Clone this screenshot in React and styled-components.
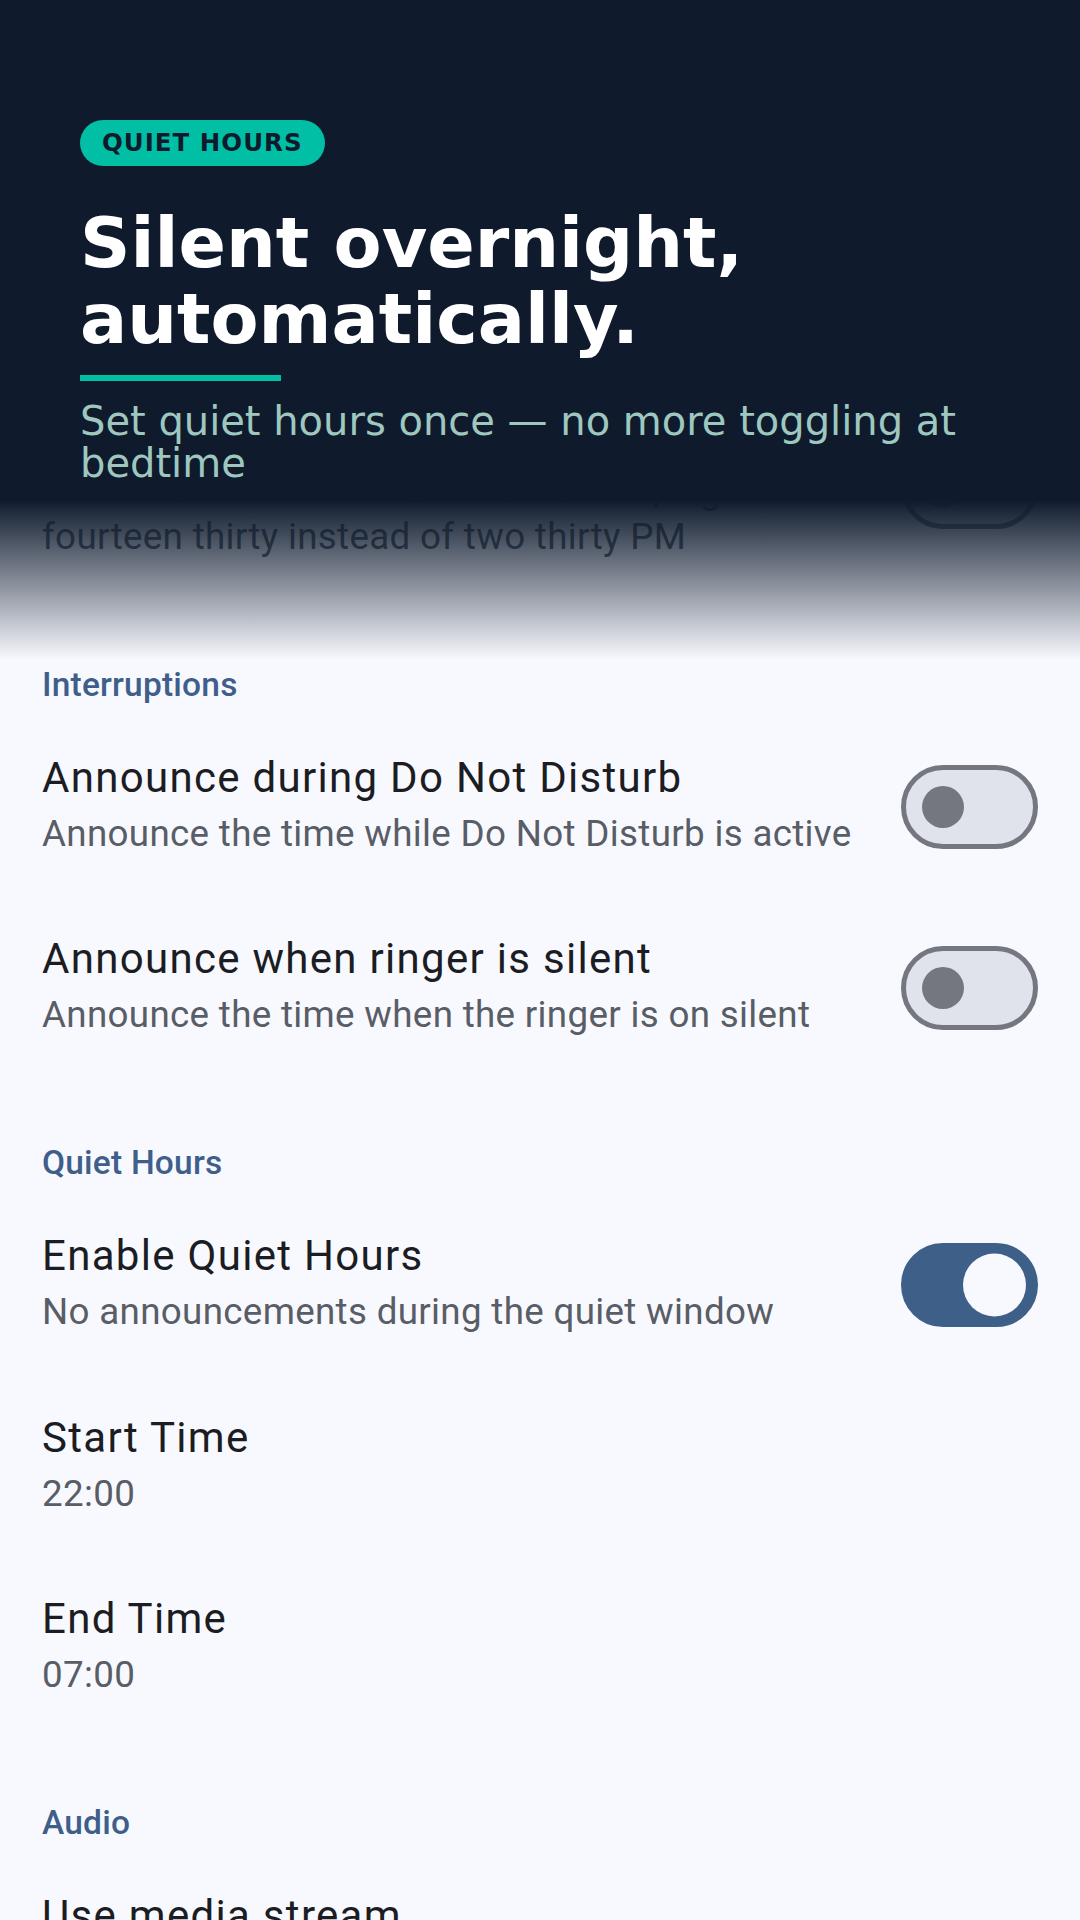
import React from 'react'
import styled, { createGlobalStyle } from 'styled-components'

const GlobalStyle = createGlobalStyle`
  html, body {
    margin: 0;
    padding: 0;
    background: #f8f9ff;
  }
  * {
    box-sizing: border-box;
  }
`

const sections = [
  {
    title: 'General',
    items: [
      { title: 'Announce the time', summary: 'Speak the time at regular intervals', toggle: true, on: true },
    ],
  },
  {
    title: 'Time Format',
    items: [
      {
        title: 'Use 24-hour format',
        summary: ['Announce the time in 24-hour format, e.g.', 'fourteen thirty instead of two thirty PM'],
        toggle: true,
        on: false,
      },
    ],
  },
  {
    title: 'Interruptions',
    items: [
      { title: 'Announce during Do Not Disturb', summary: 'Announce the time while Do Not Disturb is active', toggle: true, on: false },
      { title: 'Announce when ringer is silent', summary: 'Announce the time when the ringer is on silent', toggle: true, on: false },
    ],
  },
  {
    title: 'Quiet Hours',
    items: [
      { title: 'Enable Quiet Hours', summary: 'No announcements during the quiet window', toggle: true, on: true },
      { title: 'Start Time', summary: '22:00' },
      { title: 'End Time', summary: '07:00' },
    ],
  },
  {
    title: 'Audio',
    items: [
      {
        title: 'Use media stream',
        summary: ['Play announcements through the media', 'volume instead of the notification volume'],
        toggle: true,
        on: false,
      },
    ],
  },
]

const Switch = ({ on }) => (
  <Track $on={on}>
    <Thumb $on={on} />
  </Track>
)

const App = () => {
  return (
    <>
      <GlobalStyle />
      <Screen>
        <SettingsList>
          {sections.map((section) => (
            <Section key={section.title}>
              <SectionHeader>{section.title}</SectionHeader>
              {section.items.map((item) => (
                <PrefRow key={item.title}>
                  <PrefText>
                    <PrefTitle>{item.title}</PrefTitle>
                    {Array.isArray(item.summary) ? (
                      item.summary.map((line) => <PrefSummary key={line}>{line}</PrefSummary>)
                    ) : (
                      <PrefSummary>{item.summary}</PrefSummary>
                    )}
                  </PrefText>
                  {item.toggle && <Switch on={item.on} />}
                </PrefRow>
              ))}
            </Section>
          ))}
        </SettingsList>

        <HeroOverlay>
          <Badge>QUIET HOURS</Badge>
          <HeroTitle>Silent overnight, automatically.</HeroTitle>
          <AccentBar />
          <HeroSubtitle>Set quiet hours once — no more toggling at bedtime</HeroSubtitle>
        </HeroOverlay>
      </Screen>
    </>
  )
}

export default App

const Screen = styled.div`
  position: relative;
  width: 1080px;
  height: 1920px;
  overflow: hidden;
  background: #f8f9ff;
`

const SettingsList = styled.div`
  display: flex;
  flex-direction: column;
  padding-top: 74px;
  font-family: Roboto, "Noto Sans", sans-serif;
`

const Section = styled.div`
  display: flex;
  flex-direction: column;
  &:first-child > div:first-child {
    display: none;
  }
`

const SectionHeader = styled.div`
  padding: 64.5px 42px 7px;
  font-size: 33.5px;
  line-height: 44px;
  font-weight: 500;
  letter-spacing: 0.2px;
  color: #3f5f8a;
`

const PrefRow = styled.div`
  display: flex;
  align-items: center;
  gap: 42px;
  padding: 38.2px 42px;
`

const PrefText = styled.div`
  flex: 1;
  min-width: 0;
  display: flex;
  flex-direction: column;
`

const PrefTitle = styled.div`
  font-size: 42px;
  line-height: 52px;
  letter-spacing: 1.3px;
  color: #1b1d22;
  margin-bottom: 7px;
  white-space: nowrap;
`

const PrefSummary = styled.div`
  font-size: 36.75px;
  line-height: 46px;
  letter-spacing: 0.32px;
  color: #585d66;
  white-space: nowrap;
`

const Track = styled.div`
  flex: none;
  position: relative;
  width: 137px;
  height: 84px;
  margin-top: 5px;
  border-radius: 42px;
  border: 5.25px solid ${(p) => (p.$on ? '#3d5f88' : '#74777f')};
  background: ${(p) => (p.$on ? '#3d5f88' : '#e0e2ec')};
`

const Thumb = styled.div`
  position: absolute;
  top: 50%;
  transform: translateY(-50%);
  border-radius: 50%;
  width: ${(p) => (p.$on ? '63px' : '42px')};
  height: ${(p) => (p.$on ? '63px' : '42px')};
  left: ${(p) => (p.$on ? '57px' : '15.75px')};
  background: ${(p) => (p.$on ? '#f8f9ff' : '#74777f')};
`

const HeroOverlay = styled.div`
  position: absolute;
  top: 0;
  left: 0;
  right: 0;
  height: 660px;
  padding: 120px 80px 0;
  display: flex;
  flex-direction: column;
  align-items: flex-start;
  font-family: "DejaVu Sans", "Liberation Sans", sans-serif;
  background: linear-gradient(
    to bottom,
    #0f1b2d 0px,
    #0f1b2d 500px,
    rgba(15, 27, 45, 0) 660px
  );
`

const Badge = styled.div`
  height: 46px;
  padding: 0 22px;
  border-radius: 23px;
  background: #00bfa5;
  color: #0f1b2d;
  font-size: 24.5px;
  font-weight: 700;
  line-height: 46px;
  letter-spacing: 1px;
`

const HeroTitle = styled.h1`
  margin: 38.5px 0 0;
  font-size: 70px;
  line-height: 76px;
  font-weight: 700;
  color: #ffffff;
`

const AccentBar = styled.div`
  margin-top: 18px;
  width: 201px;
  height: 6px;
  background: #00bfa5;
`

const HeroSubtitle = styled.p`
  margin: 19px 0 0;
  font-size: 40px;
  line-height: 42px;
  color: #9ec7bf;
`
